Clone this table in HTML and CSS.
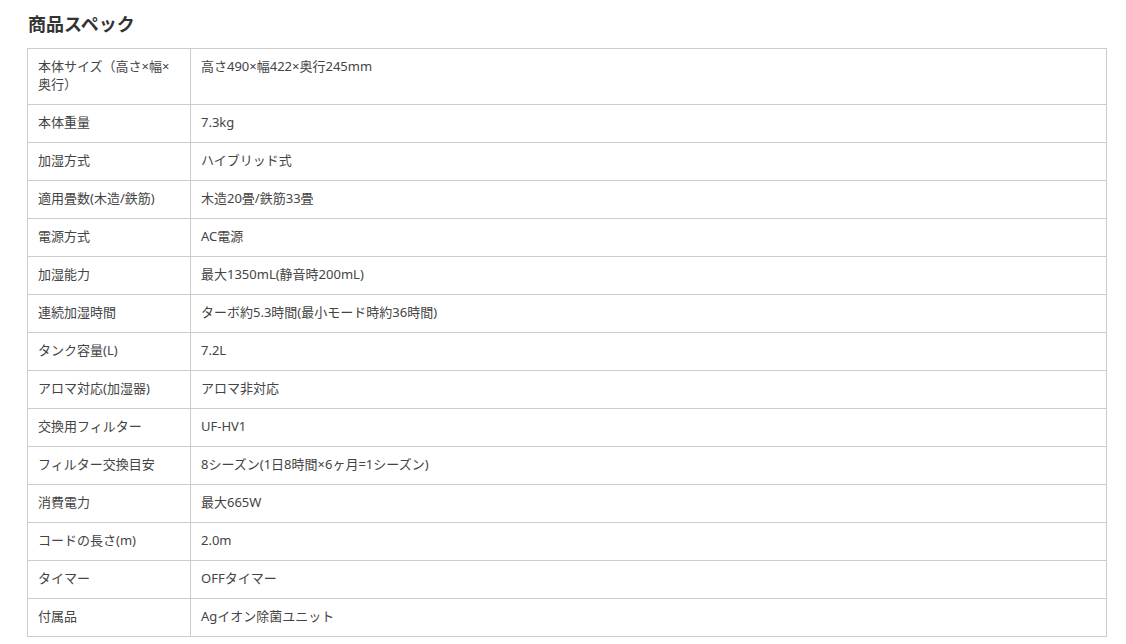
FILE: index.html
```html
<!DOCTYPE html>
<html lang="ja">
<head>
<meta charset="utf-8">
<link rel="stylesheet" href="styles.css">
</head>
<body>
<div class="spec">
  <h2 class="spec-title">商品スペック</h2>
  <table class="spec-table">
    <tbody>
      <tr><th>本体サイズ（高さ×幅×奥行）</th><td>高さ490×幅422×奥行245mm</td></tr>
      <tr><th>本体重量</th><td>7.3kg</td></tr>
      <tr><th>加湿方式</th><td>ハイブリッド式</td></tr>
      <tr><th>適用畳数(木造/鉄筋)</th><td>木造20畳/鉄筋33畳</td></tr>
      <tr><th>電源方式</th><td>AC電源</td></tr>
      <tr><th>加湿能力</th><td>最大1350mL(静音時200mL)</td></tr>
      <tr><th>連続加湿時間</th><td>ターボ約5.3時間(最小モード時約36時間)</td></tr>
      <tr><th>タンク容量(L)</th><td>7.2L</td></tr>
      <tr><th>アロマ対応(加湿器)</th><td>アロマ非対応</td></tr>
      <tr><th>交換用フィルター</th><td>UF-HV1</td></tr>
      <tr><th>フィルター交換目安</th><td>8シーズン(1日8時間×6ヶ月=1シーズン)</td></tr>
      <tr><th>消費電力</th><td>最大665W</td></tr>
      <tr><th>コードの長さ(m)</th><td>2.0m</td></tr>
      <tr><th>タイマー</th><td>OFFタイマー</td></tr>
      <tr><th>付属品</th><td>Agイオン除菌ユニット</td></tr>
    </tbody>
  </table>
</div>
</body>
</html>
```
FILE: styles.css
```css
html, body {
  margin: 0;
  padding: 0;
  background: #fff;
}
body {
  font-family: "Noto Sans", "Noto Sans CJK JP", sans-serif;
  color: #444;
}
.spec {
  padding: 10px 0 0 27px;
}
.spec-title {
  margin: 0 0 12px 1px;
  font-family: "Noto Sans CJK JP", sans-serif;
  font-size: 18px;
  line-height: 26px;
  font-weight: bold;
  color: #333;
}
.spec-table {
  width: 1080px;
  border-collapse: collapse;
  font-size: 13px;
  line-height: 18px;
}
.spec-table th,
.spec-table td {
  border: 1px solid #ccc;
  padding: 8px 10px 11px;
  text-align: left;
  vertical-align: top;
  font-weight: normal;
}
.spec-table th {
  width: 142px;
}
```
